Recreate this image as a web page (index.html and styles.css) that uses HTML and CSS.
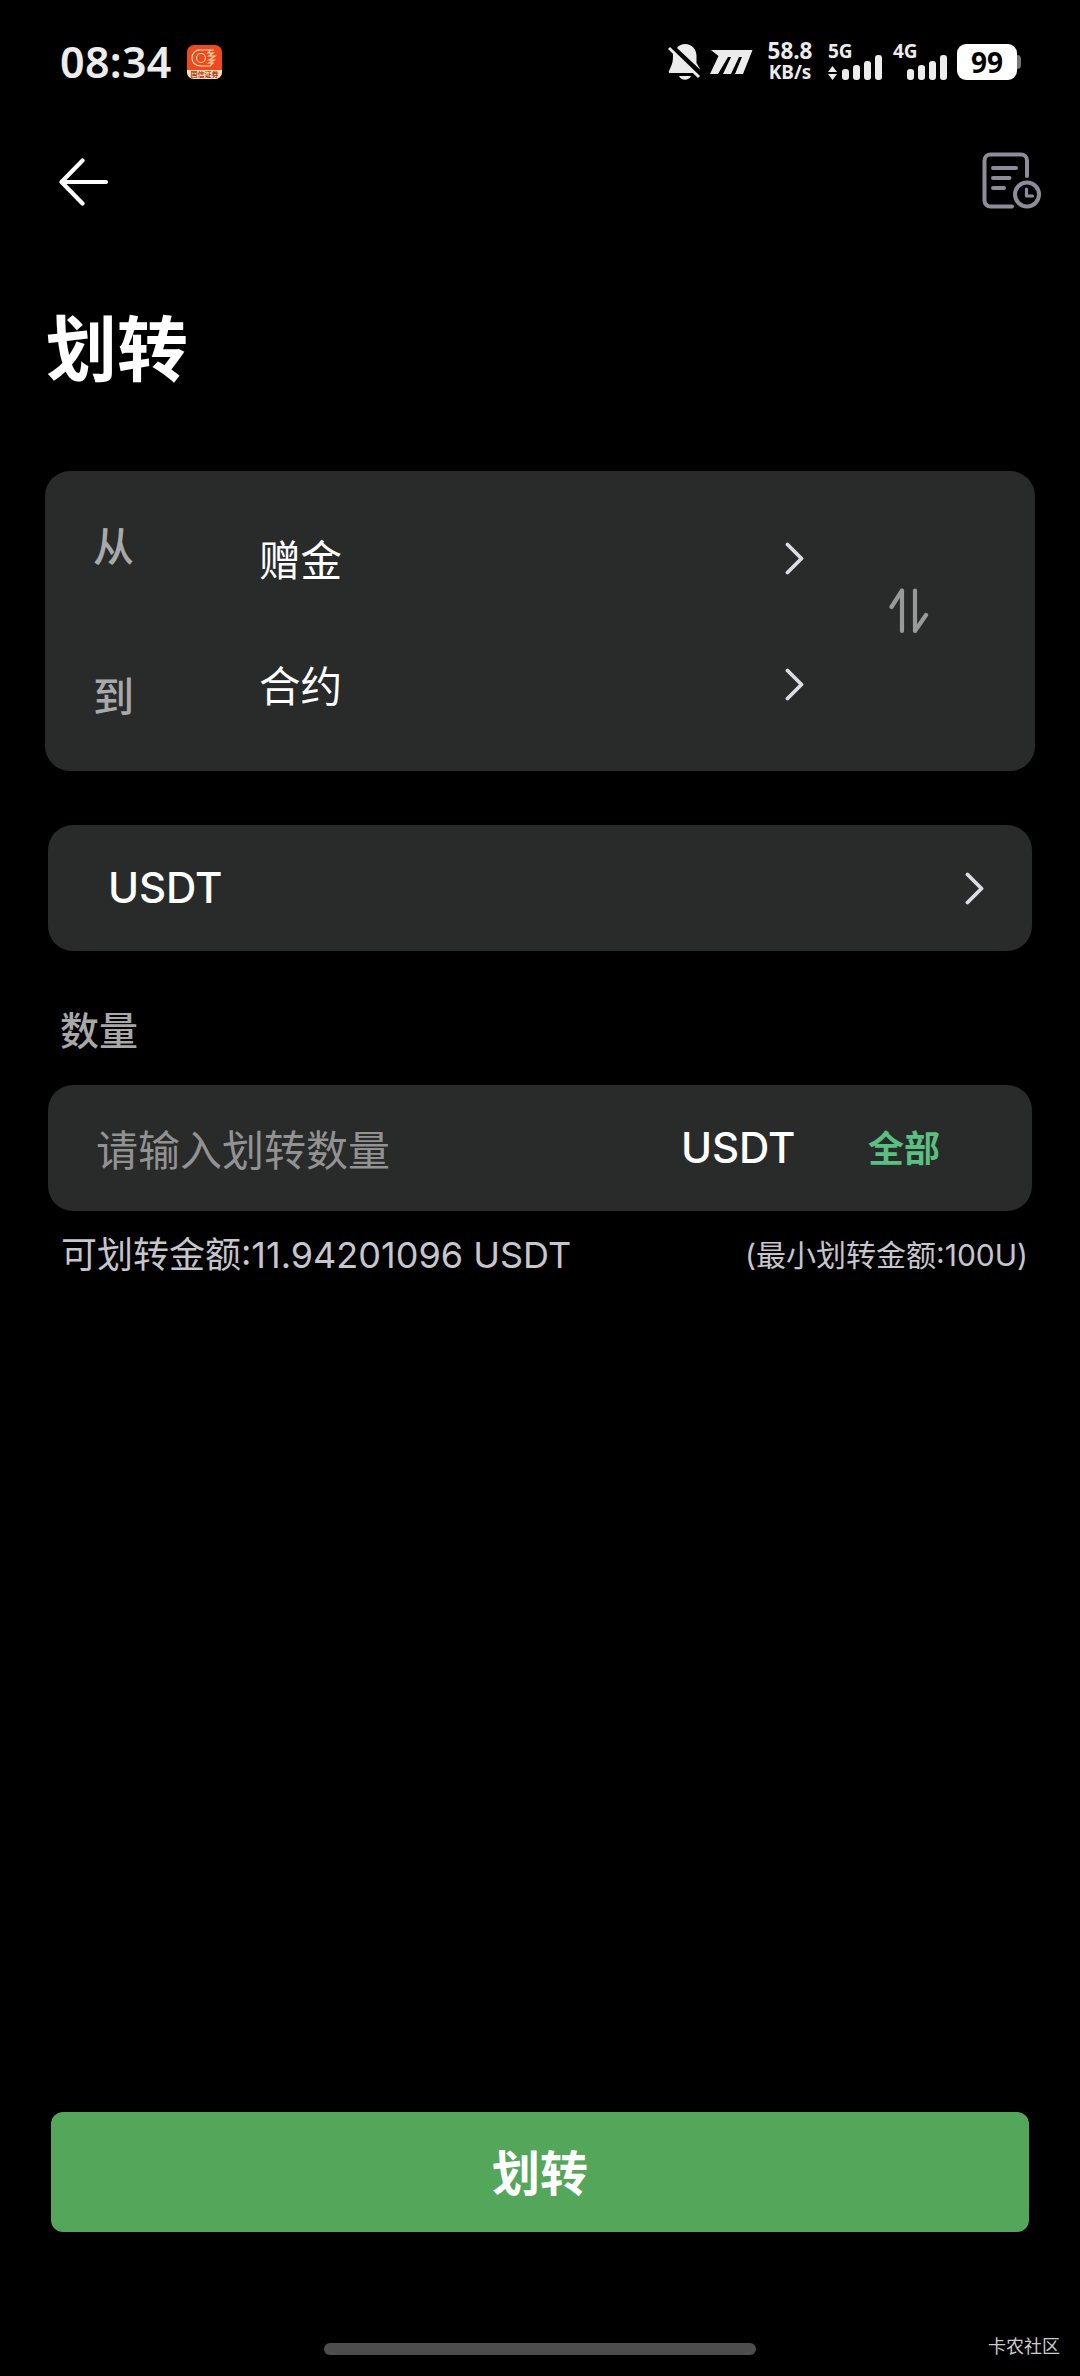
FILE: index.html
```html
<!DOCTYPE html>
<html lang="zh-CN">
<head>
<meta charset="utf-8">
<title>划转</title>
<link rel="stylesheet" href="styles.css">
</head>
<body>
<header class="status">
  <span class="clock">08:34</span>
  <div class="app">
    <svg width="34" height="25" viewBox="0 0 34 25" fill="none" stroke="#ffd9a8" stroke-width="1.2"><circle cx="14" cy="13" r="4.5"/><path d="M27 5H15C8 4 5 9 5 13s3 8 9 8h9l3-3h-4l5-3h-5l6-4h-6l4-3h-5l3-3"/></svg>
    <span class="app-name">国信证券</span>
  </div>
  <div class="indicators">
    <svg class="bell" width="34" height="36" viewBox="0 0 34 36"><path fill="#ececec" d="M9 4C11 1 14 0 17 0c7 0 11.500 5 11.500 12v7l4 7zM5 9l21 20H2c-1.500 0-1.500-2-.5-3L4 20c1-3 1-7 1-11zM11 32h12c-2 5-10 5-12 0z"/><path d="M1 4l30 29" stroke="#ececec" stroke-width="3"/></svg>
    <svg class="speed-logo" width="43" height="24" viewBox="0 0 43 24" fill="#ececec"><path d="M1 0h41.500L33 24h-8l7-17h-3l-8 17h-8l8-17h-3L8 24H0L8.500 6z"/></svg>
    <div class="rate"><span class="value">58.8</span><span class="unit">KB/s</span></div>
    <div class="net">
      <span>5G</span>
      <svg width="55" height="25" viewBox="0 0 55 25" fill="#ececec"><path d="M0 17l4.500-6 4.500 6zM0 19h9l-4.500 6z"/><rect x="14" y="14" width="7" height="11" rx="3"/><rect x="25" y="10" width="7" height="15" rx="3"/><rect x="36" y="6" width="7" height="19" rx="3"/><rect x="47" y="0" width="7" height="25" rx="3"/></svg>
    </div>
    <div class="net">
      <span>4G</span>
      <svg width="55" height="25" viewBox="0 0 55 25" fill="#ececec"><rect x="14" y="14" width="7" height="11" rx="3"/><rect x="25" y="10" width="7" height="15" rx="3"/><rect x="36" y="6" width="7" height="19" rx="3"/><rect x="47" y="0" width="7" height="25" rx="3"/></svg>
    </div>
    <div class="battery">99</div><i class="nub"></i>
  </div>
</header>

<nav class="nav">
  <svg width="50" height="48" viewBox="0 0 50 48" fill="none" stroke="#fff" stroke-width="4.200" stroke-linecap="round" stroke-linejoin="round"><path d="M23.500 2.500L2.500 24l21 21.500M2.500 24H47"/></svg>
  <svg width="60" height="58" viewBox="0 0 60 58" fill="none" stroke="#8e8b9b" stroke-width="4" stroke-linecap="round" stroke-linejoin="round"><path d="M45 24V8.500a6 6 0 0 0-6-6H8.500a6 6 0 0 0-6 6v40a6 6 0 0 0 6 6H30M11 16h23M11 26h16.500M11 36h11"/><circle cx="45" cy="42.500" r="12"/><path d="M44.500 37v7h6" stroke-width="3.200"/></svg>
</nav>

<h1 class="title">划转</h1>

<section class="accounts">
  <div class="labels"><span>从</span><span>到</span></div>
  <div class="choices">
    <div class="choice"><span>赠金</span><svg class="chevron" width="20" height="33" viewBox="0 0 20 33"><path d="M2.500 2.500l14 14-14 14"/></svg></div>
    <div class="choice"><span>合约</span><svg class="chevron" width="20" height="33" viewBox="0 0 20 33"><path d="M2.500 2.500l14 14-14 14"/></svg></div>
  </div>
  <svg class="swap" width="40" height="48" viewBox="0 0 40 48"><path d="M2.500 20L13 3.500V44M26 3.500V44L37 28"/></svg>
</section>

<section class="coin"><span class="usdt">USDT</span><svg class="chevron" width="20" height="33" viewBox="0 0 20 33"><path d="M2.500 2.500l14 14-14 14"/></svg></section>

<div class="amount-label">数量</div>
<section class="amount">
  <span class="placeholder">请输入划转数量</span>
  <span class="usdt">USDT</span>
  <span class="all">全部</span>
</section>
<div class="hints"><span class="available">可划转金额:11.94201096 USDT</span><span class="minimum">(最小划转金额:100U)</span></div>

<button class="submit">划转</button>
<footer class="footer"><i class="home"></i><span class="mark">卡农社区</span></footer>
</body>
</html>
```
FILE: styles.css
```css
* { box-sizing: border-box; }
body {
  margin: 0;
  width: 1080px;
  height: 2376px;
  display: flex;
  flex-direction: column;
  overflow: hidden;
  background: #000;
  color: #fff;
  font-family: "Noto Sans CJK SC", sans-serif;
}
svg { display: block; flex: none; }
span { white-space: nowrap; }

.status { display: flex; height: 124px; padding: 44px 59px 0 60px; color: #ececec; }
.clock { width: 127px; font: 600 43px/35px "Noto Sans", sans-serif; letter-spacing: 0.3px; }
.app { width: 35px; height: 34px; margin-top: 1px; border-radius: 7px; background: #ee4a20; overflow: hidden; }
.app-name { display: block; height: 9px; background: #ffe3b5; color: #b5361b; font-size: 7px; line-height: 9px; text-align: center; font-weight: 700; }
.indicators { display: flex; margin-left: auto; }
.bell { margin-right: 8px; }
.speed-logo { margin: 6px 12px 0 0; }
.rate { width: 50px; margin-right: 13px; display: flex; flex-direction: column; align-items: center; font-family: "Noto Sans", sans-serif; font-weight: 700; }
.value { margin-top: -3px; font-size: 22.500px; line-height: 20px; }
.unit { font-size: 19px; line-height: 22px; }
.net { width: 55px; height: 36px; margin-right: 10px; font: 700 19px/14px "Noto Sans", sans-serif; }
.net span { display: block; height: 11px; }
.battery { width: 60px; height: 36px; border-radius: 9px; background: #fff; color: #000; text-align: center; font: 700 28px/36px "Noto Sans", sans-serif; margin-left: -1px; }
.nub { width: 4px; height: 14px; margin-top: 11px; border-radius: 0 5px 5px 0; background: #777; }

.nav { display: flex; justify-content: space-between; height: 86px; padding: 28px 38px 0 59px; }
.nav svg:first-child { margin-top: 6px; }

.title { margin: 84px 0 0 46px; height: 104px; font-size: 71px; line-height: 100px; font-weight: 700; }

.accounts { display: flex; width: 990px; height: 300px; margin: 73px 0 0 45px; border-radius: 25px; background: #292a2a; }
.labels { width: 214px; flex: none; padding: 43px 0 0 48px; display: flex; flex-direction: column; color: #a9a9a9; font-size: 41px; line-height: 60px; font-weight: 500; gap: 90px; }
.choices { width: 546px; flex: none; padding-top: 57px; }
.choice { display: flex; justify-content: space-between; height: 126px; font-size: 41.500px; line-height: 60px; }
.choice .chevron { margin: 14px 0 0; }
.chevron { fill: none; stroke: #dcdce2; stroke-width: 3.800; stroke-linecap: round; stroke-linejoin: round; }
.swap { margin: 116px 0 0 84px; fill: none; stroke: #999; stroke-width: 4.200; stroke-linecap: round; stroke-linejoin: round; }

.coin, .amount { display: flex; align-items: center; width: 984px; height: 126px; margin-left: 48px; border-radius: 25px; background: #292a2a; }
.coin { margin-top: 54px; justify-content: space-between; padding: 0 47px 0 60px; }
.usdt { font: 500 42px/60px Inter, sans-serif; letter-spacing: -0.1px; }

.amount-label { height: 60px; margin: 47px 0 27px 60px; color: #a8a8a8; font-size: 39px; line-height: 60px; font-weight: 500; }
.amount { padding-left: 48px; }
.placeholder { width: 585px; color: #929292; font-size: 42px; font-weight: 400; line-height: 60px; }
.amount .usdt { width: 187px; }
.all { color: #5abf80; font-size: 36px; line-height: 60px; font-weight: 700; margin-top: -4px; }

.hints { display: flex; justify-content: space-between; height: 50px; margin-top: 19px; padding: 0 52px 0 61px; color: #c7c5cd; font-family: Inter, "Noto Sans CJK SC", sans-serif; line-height: 50px; }
.available { font-size: 36px; }
.minimum { font-size: 30px; }

.submit { width: 978px; height: 120px; margin: auto 0 0 51px; border: 0; border-radius: 12px; background: #54a65a; color: #fff; font: 700 48px/60px "Noto Sans CJK SC", sans-serif; padding: 0 0 4px; }
.footer { display: grid; grid-template-columns: 324px 432px 1fr; align-items: center; height: 144px; padding: 93px 20px 12px 0; }
.home { grid-column: 2; height: 12px; border-radius: 6px; background: #4d4d4d; margin-top: 9px; }
.mark { justify-self: end; color: #ccc; font-size: 18px; line-height: 26px; font-weight: 400; }
```
